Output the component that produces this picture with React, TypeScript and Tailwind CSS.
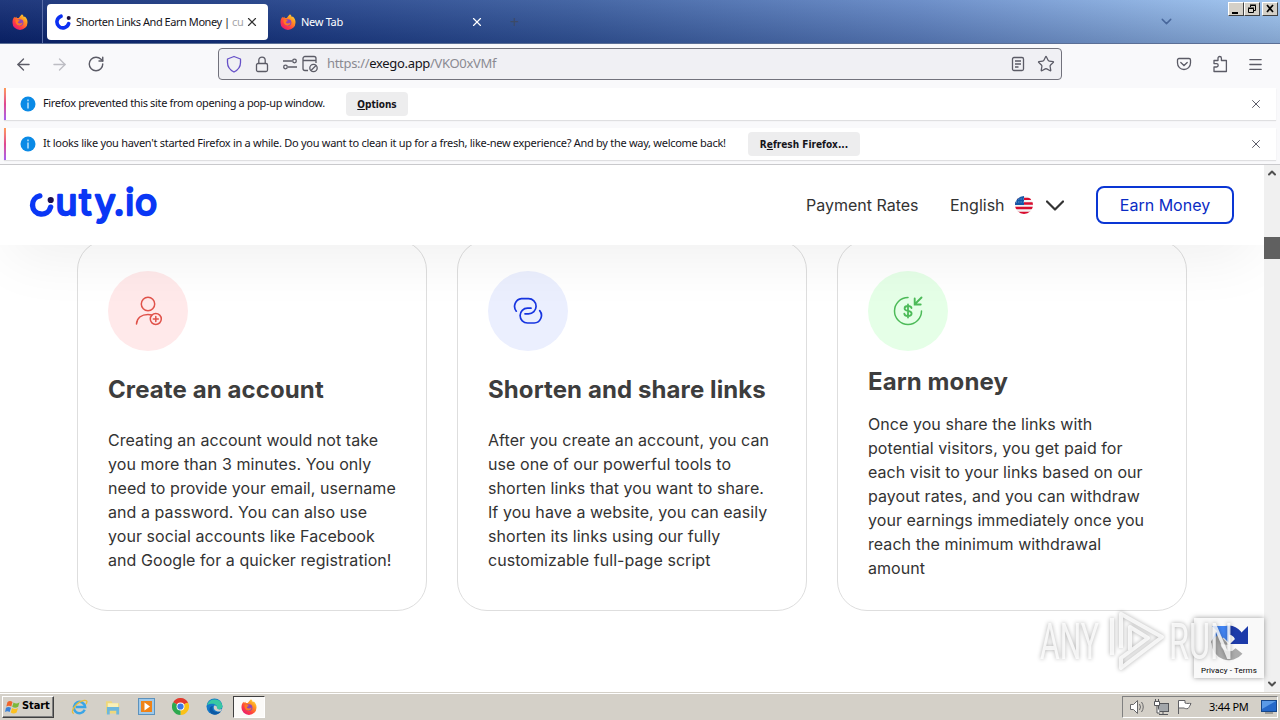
import {
  ArrowLeft,
  ArrowRight,
  ChevronDown,
  ChevronUp,
  Lock,
  Menu,
  RotateCw,
  Star,
  X,
} from "lucide-react";

function FirefoxIcon({ size = 16 }: any) {
  return (
    <svg width={size} height={size} viewBox="0 0 16 16" className="shrink-0">
      <defs>
        <linearGradient id="fxBody" x1="1" y1="0" x2="0.2" y2="1">
          <stop offset="0" stopColor="#fff04a" />
          <stop offset="0.35" stopColor="#ff9a1f" />
          <stop offset="0.7" stopColor="#ff4040" />
          <stop offset="1" stopColor="#e3167a" />
        </linearGradient>
      </defs>
      <path
        d="M10 0.3c1 .9 1.6 1.8 1.8 2.8.6-.1.9-.3 1-.5 1.800 1.500 2.900 3.700 2.700 6.200A7.500 7.200 0 0 1 .5 8.700C.4 6.500 1 4.300 2.500 2.800l.5 1.300c.4-.6.8-1 1.300-1.400l.5 1.200 2 .1C7.700 2.500 8.800 1.500 10 .3Z"
        fill="url(#fxBody)"
      />
      <circle cx="8" cy="8.600" r="3.400" fill="#8f45b8" />
      <path
        d="M3.500 6.200c1.600-.8 3-.5 4.500.7-1.200.2-2.200.7-2.200 1.500 1 1.300 3.300 1.300 4.800.2-.4 2.300-2 3.300-3.700 3-2.300-.4-3.700-2.700-3.400-5.400Z"
        fill="#ff7a22"
      />
    </svg>
  );
}

function CutyMark() {
  return (
    <svg width="16" height="16" viewBox="0 0 16 16" className="shrink-0">
      <path
        d="M6 2.200A6 6 0 1 0 13.700 9.600"
        fill="none"
        stroke="#0b2ff2"
        strokeWidth="3.600"
        strokeLinecap="round"
      />
      <circle cx="13.700" cy="4" r="2" fill="#1d0f3c" />
    </svg>
  );
}

function TabBar() {
  return (
    <div className="relative flex h-11 shrink-0 border-b border-[#5b6f96] bg-[linear-gradient(to_bottom,rgba(255,255,255,0.09),rgba(0,0,30,0.17)),linear-gradient(to_right,#0b2670_0%,#183883_20%,#34589c_45%,#6085c4_72%,#9dc4f0_100%)]">
      <div className="flex w-[43px] items-center border-r border-[#5a6ea8] pl-3">
        <FirefoxIcon />
      </div>
      <div className="ml-1 mt-1 flex h-9 w-[221px] items-center rounded bg-white pl-2">
        <CutyMark />
        <div className="ml-[5px] w-[169px] whitespace-nowrap text-[11px] tracking-[-0.45px] text-[#15141a]">
          Shorten Links And Earn Money | <span className="text-[#a5a5aa]">cu</span>
        </div>
        <X size={14} strokeWidth={2} className="text-[#333]" />
      </div>
      <div className="ml-3 flex h-11 w-[204px] items-center text-white">
        <FirefoxIcon />
        <span className="ml-[5px] grow text-[11px] tracking-[-0.3px]">New Tab</span>
        <X size={14} strokeWidth={2} />
      </div>
      <span className="ml-[26px] mt-[14px] text-[16px] leading-4 text-[#3c4a68]">
        +
      </span>
      <ChevronDown
        size={17}
        strokeWidth={2}
        className="ml-auto mr-[105px] mt-[13px] text-[#48679b]"
      />
      <div className="absolute right-[2px] top-[2px] flex text-black">
        <WinButton>
          <path d="M3 10h6v2H3z" fill="currentColor" />
        </WinButton>
        <WinButton>
          <path
            d="M5.500 5V3.500h5v5H9M3.500 6.500h5v4h-5zM5 3h6M3 6h6"
            fill="none"
            stroke="currentColor"
          />
        </WinButton>
        <span className="w-[2px]" />
        <WinButton>
          <path
            d="m4 3 6 7m0-7-6 7"
            fill="none"
            stroke="currentColor"
            strokeWidth="1.700"
          />
        </WinButton>
      </div>
    </div>
  );
}

function WinButton({ children }: any) {
  return (
    <div className="h-[14px] w-4 border border-b-[#404040] border-l-white border-r-[#404040] border-t-white bg-[#d4d0c8]">
      <svg width="14" height="12" viewBox="0 1 14 12">
        {children}
      </svg>
    </div>
  );
}

function NavBar() {
  return (
    <div className="flex h-11 shrink-0 items-center bg-[#f9f9fb] pb-1 text-[#5b5b66]">
      <ArrowLeft size={19} strokeWidth={1.700} className="ml-[14px]" />
      <ArrowRight
        size={19}
        strokeWidth={1.700}
        className="ml-[17px] text-[#bdbdc3]"
      />
      <RotateCw size={18} strokeWidth={1.900} className="ml-[18px]" />
      <div className="ml-[113px] flex h-8 w-[844px] items-center rounded border border-[#72727c] bg-[#f0f0f4] pl-[7px]">
        <svg width="16" height="18" viewBox="0 0 16 18" fill="none">
          <path
            d="M8 1.500 14.500 4v3.500c0 4.500-2.500 7.500-6.500 9.500-4-2-6.500-5-6.500-9.500V4Z"
            stroke="#6650c8"
            strokeWidth="1.300"
            strokeLinejoin="round"
          />
        </svg>
        <svg
          width="14"
          height="17"
          viewBox="0 0 14 17"
          fill="none"
          stroke="currentColor"
          strokeWidth="1.300"
          className="ml-[13px]"
        >
          <rect x="1.500" y="7.500" width="11" height="8" rx="1.500" />
          <path d="M3.800 7.500V4.300a3.200 3.200 0 0 1 6.400 0v3.200" />
        </svg>
        <svg
          width="36"
          height="18"
          viewBox="0 0 36 18"
          fill="none"
          stroke="currentColor"
          strokeWidth="1.300"
          className="ml-[13px]"
        >
          <path d="M1 6h9M6 12h9" />
          <circle cx="12.500" cy="6" r="1.800" />
          <circle cx="3.500" cy="12" r="1.800" />
          <path d="M26 15.500h-3a2 2 0 0 1-2-2v-10a2 2 0 0 1 2-2h9a2 2 0 0 1 2 2V8M21 5.500h13" />
          <circle cx="31.500" cy="13" r="3.700" />
          <path d="m29 15.500 5-5" />
        </svg>
        <span className="ml-[9px] pb-px text-[13px] tracking-[-0.32px] text-[#8a8a92]">
          https://<span className="text-[#15141a]">exego.app</span>/VKO0xVMf
        </span>
        <svg
          width="14"
          height="16"
          viewBox="0 0 14 16"
          fill="none"
          stroke="currentColor"
          strokeWidth="1.300"
          className="ml-auto"
        >
          <rect x="1.500" y="1.500" width="11" height="13" rx="1.500" />
          <path d="M4 5h6M4 8h6M4 11h3.500" />
        </svg>
        <Star size={18} strokeWidth={1.700} className="ml-3 mr-[6px]" />
      </div>
      <svg
        width="16"
        height="16"
        viewBox="0 0 16 16"
        fill="none"
        stroke="currentColor"
        strokeWidth="1.300"
        strokeLinecap="round"
        className="ml-[114px]"
      >
        <path d="M3 2.500h10a1.500 1.500 0 0 1 1.500 1.500v3a6.500 6.500 0 0 1-13 0V4A1.500 1.500 0 0 1 3 2.500Z" />
        <path d="m4.800 6.500 3.200 3 3.200-3" />
      </svg>
      <svg
        width="18"
        height="18"
        viewBox="0 0 18 18"
        fill="none"
        stroke="currentColor"
        strokeWidth="1.300"
        strokeLinejoin="round"
        className="ml-[19px]"
      >
        <path d="M3 16.500V12h2.500a1.700 1.700 0 0 0 0-3.400H3V5.500h4V3.200a1.700 1.700 0 0 1 3.400 0v2.300h5v11Z" />
      </svg>
      <Menu size={17} strokeWidth={1.800} className="ml-[18px]" />
    </div>
  );
}

function Notice({ text, width, button }: any) {
  return (
    <div className="mr-1 ml-1 flex h-8 shrink-0 items-center bg-white shadow-[0_1px_1px_rgba(0,0,0,0.1)]">
      <div className="h-8 w-[2px] bg-gradient-to-b from-[#ff9a56] via-[#e0458f] to-[#a55cf0]" />
      <svg width="16" height="16" viewBox="0 0 16 16" className="ml-[14px]">
        <circle cx="8" cy="8" r="7.500" fill="#0a8ae6" />
        <path d="M8 3.500v1.700M8 6.500v6" stroke="#d5efff" strokeWidth="1.300" />
      </svg>
      <span className={`ml-[7px] whitespace-nowrap pb-[2px] text-[11px] text-[#15141a] ${width}`}>
        {text}
      </span>
      {button}
      <X size={14} strokeWidth={1.700} className="ml-auto mr-[13px] text-[#5b5b66]" />
    </div>
  );
}

function NoticeButton({ children, className }: any) {
  return (
    <div
      className={`flex h-6 items-center justify-center rounded bg-[#ededee] font-['DejaVu_Sans_Condensed'] text-[10px] font-bold text-[#15141a] ${className}`}
    >
      <span>{children}</span>
    </div>
  );
}

function CutyLogo() {
  return (
    <svg
      width="134"
      height="44"
      viewBox="28 183 134 44"
      className="shrink-0 overflow-visible"
    >
      <path
        d="M39.800 195.900A9.200 9.200 0 1 0 50.600 207.200"
        fill="none"
        stroke="#0a37f5"
        strokeWidth="5.400"
        strokeLinecap="round"
      />
      <circle cx="50.700" cy="200" r="3.100" fill="#1d0f4c" />
      <text
        x="55.500 79.300 94.800 113.700 125.200 135"
        y="214.500"
        fill="#0a37f5"
        stroke="#0a37f5"
        strokeWidth="2.400"
        strokeLinejoin="round"
        className="font-['Inter'] text-[37px] font-normal"
      >
        uty.io
      </text>
    </svg>
  );
}

function UsFlag() {
  return (
    <svg width="18" height="18" viewBox="0 0 18 18">
      <clipPath id="flagClip">
        <circle cx="9" cy="9" r="9" />
      </clipPath>
      <g clipPath="url(#flagClip)">
        <rect width="18" height="18" fill="#f3f3f3" />
        <path
          d="M0 2.800h18M0 7.500h18M0 12h18M0 16.800h18"
          stroke="#d80d2f"
          strokeWidth="2.300"
        />
        <rect width="9" height="9" fill="#1257a8" />
        <path
          d="M1 3h8M1 6h8"
          stroke="#8fb5df"
          strokeWidth="0.900"
          strokeDasharray="1 1.300"
        />
      </g>
    </svg>
  );
}

function SiteHeader() {
  return (
    <header className="relative z-10 flex h-20 shrink-0 items-center bg-white pl-7 pr-[30px] text-base text-[#333] shadow-[0_20px_60px_-10px_rgba(0,0,0,0.07)]">
      <CutyLogo />
      <span className="ml-auto w-[112px] whitespace-nowrap">Payment Rates</span>
      <span className="ml-8 w-[54px]">English</span>
      <div className="ml-[11px]">
        <UsFlag />
      </div>
      <svg width="18" height="11" viewBox="0 0 18 11" fill="none" className="ml-[13px]">
        <path
          d="m1 1.500 8 8 8-8"
          stroke="#333"
          strokeWidth="2.200"
          strokeLinecap="round"
          strokeLinejoin="round"
        />
      </svg>
      <div className="ml-8 flex h-[38px] w-[138px] items-center justify-center rounded-lg border-2 border-[#0a36d4] text-[#0a2bc4]">
        Earn Money
      </div>
    </header>
  );
}

function Card({ icon, circle, title, titleClass, lines }: any) {
  return (
    <div className="h-[371px] w-[350px] rounded-[30px] border border-[#dedede] px-[30px] pt-[30px] text-[#333]">
      <div
        className={`flex h-20 w-20 items-center justify-center rounded-full ${circle}`}
      >
        {icon}
      </div>
      <h3
        className={`whitespace-nowrap text-2xl font-bold leading-[30px] tracking-[0.1px] text-[#3d3d3d] ${titleClass}`}
      >
        {title}
      </h3>
      <p className="whitespace-nowrap text-base leading-6 tracking-[0.06px]">
        {lines.map((line: string) => (
          <span key={line} className="block">
            {line}
          </span>
        ))}
      </p>
    </div>
  );
}

const userIcon = (
  <svg width="30" height="30" viewBox="0 0 30 30" fill="none" stroke="#e0524a" strokeWidth="1.500" strokeLinecap="round">
    <circle cx="15" cy="8" r="6.700" />
    <path d="M3.500 28c.5-6.200 5.300-9.500 11.500-9.500 1.500 0 2.500.1 3.500.5" />
    <circle cx="22.800" cy="23" r="5.500" />
    <path d="M20.300 23h5M22.800 20.500v5" />
  </svg>
);

const linkIcon = (
  <svg width="30" height="30" viewBox="0 0 30 30" fill="none" stroke="#1735e0" strokeWidth="1.700" strokeLinecap="round">
    <path d="M3.300 15.200A7.800 7.800 0 0 1 8.500 2.600H15.500a7.600 7.600 0 0 1 0 15.200H12" />
    <path d="M18 12.200H14.500a7.400 7.400 0 0 0 0 14.800H21.200A7.600 7.600 0 0 0 26.700 14.600" />
  </svg>
);

const moneyIcon = (
  <svg width="30" height="30" viewBox="0 0 30 30" fill="none" stroke="#4dbb59" strokeWidth="1.500" strokeLinecap="round">
    <path d="M15 1.500A13.500 13.500 0 1 0 28.500 15" />
    <path d="m28.500 1.500-6.500 6.500M21.700 2.500v6h6" strokeWidth="1.900" />
    <path
      d="M18.500 12c-.3-1.400-1.600-2-3.500-2s-3.400.8-3.400 2.400c0 3.500 7 1.500 7 5.100 0 1.700-1.500 2.500-3.600 2.500s-3.500-.8-3.700-2.400M15 8.500v13"
      strokeWidth="1.800"
    />
  </svg>
);

function Recaptcha() {
  return (
    <div className="absolute bottom-[14px] right-4 flex h-[60px] w-[70px] flex-col items-center bg-[#f9f9f9] pt-[5px] shadow-[0_0_5px_rgba(128,128,128,0.8)]">
      <svg width="40" height="40" viewBox="0 0 40 40" fill="none">
        <path d="M31 20A12 12 0 0 0 20 7" stroke="#1c3aa9" strokeWidth="9" />
        <path d="M39 3v18H21Z" fill="#1c3aa9" />
        <path d="M20 7A13 13 0 0 0 8 20" stroke="#4285f4" strokeWidth="9" />
        <path d="M3 3h17v17Z" fill="#4285f4" />
        <path d="M7 20a13 13 0 0 0 23 8" stroke="#ababab" strokeWidth="9" />
        <path d="M2 20v-2l8-7 10 11Z" fill="#ababab" />
      </svg>
      <span className="mt-px whitespace-nowrap font-['Roboto'] text-[8px] leading-[14px] tracking-[0.1px] text-black">
        Privacy - Terms
      </span>
    </div>
  );
}

function Watermark() {
  return (
    <svg
      width="204"
      height="70"
      viewBox="1034 606 204 70"
      className="absolute bottom-4 right-[42px] overflow-visible drop-shadow-[0_0_2px_rgba(0,0,0,0.4)]"
    >
      <g opacity="0.8">
        <text
          x="1040"
          y="659"
          textLength="59"
          lengthAdjust="spacingAndGlyphs"
          fill="#fff"
          className="font-['Roboto'] text-[50px]"
        >
          ANY
        </text>
        <text
          x="1169"
          y="659"
          textLength="64"
          lengthAdjust="spacingAndGlyphs"
          fill="#fff"
          className="font-['Roboto'] text-[50px]"
        >
          RUN
        </text>
        <path
          d="M1112 655v-37M1121 648v-34l41 23-41 31v-10l27-20-18-11v23"
          fill="none"
          stroke="#fff"
          strokeWidth="4"
          strokeLinejoin="round"
        />
      </g>
    </svg>
  );
}

function ScrollBar() {
  return (
    <div className="flex w-4 shrink-0 flex-col items-center bg-[#f0f0f0] text-[#505050]">
      <ChevronUp size={12} strokeWidth={4} className="mt-[2px]" />
      <div className="mt-[58px] h-[22px] w-4 bg-[#606060]" />
      <ChevronDown size={12} strokeWidth={4} className="mb-[2px] mt-auto" />
    </div>
  );
}

function TaskBar() {
  return (
    <div className="flex h-7 shrink-0 items-center border-t border-[#d4d0c8] bg-[#d4d0c8] pl-[2px] pr-[2px] shadow-[inset_0_1px_0_#fff]">
      <div className="flex h-[22px] w-[52px] items-center border border-b-[#404040] border-l-white border-r-[#404040] border-t-white pl-[2px] shadow-[inset_-1px_-1px_0_#808080]">
        <svg width="16" height="16" viewBox="0 0 16 16">
          <path d="M2.500 3q2.500-2 5 0L6.300 7.500q-2.500-1.500-5 0Z" fill="#f0652b" />
          <path d="M8.500 3.500q3 2 6-.3l-1.300 4.500q-3 2-6 0Z" fill="#7cb83a" />
          <path d="M1 8.700q2.500-1.600 5 0L4.700 13q-2.500-1.500-4.700 0Z" fill="#3a82d8" />
          <path d="M7 9q3 2 6 0l-1.400 4.500q-3 2-5.800 0Z" fill="#fcc01f" />
        </svg>
        <span className="ml-px font-['DejaVu_Sans_Condensed'] text-[11px] font-bold tracking-[-0.1px] text-black">
          Start
        </span>
      </div>
      <div className="ml-[17px] flex items-center gap-[17px]">
        <svg width="17" height="18" viewBox="0 0 18 18" fill="none">
          <path d="M14.500 12A6 6 0 1 1 15 9H5" stroke="#3aa5e6" strokeWidth="2.600" />
          <path d="M3 16C-2 15 6 3 14 2c4-.5 3 2 2 4" stroke="#e8bd3a" strokeWidth="1.400" />
        </svg>
        <svg width="16" height="18" viewBox="0 0 17 18">
          <path d="M1 3h6l1 2h7v11H1Z" fill="#eed77c" />
          <path d="M3 5h11v4H3Z" fill="#f9f0b8" />
          <path d="M2 9h13v8h-3v-4H5v4H2Z" fill="#6db7dd" />
        </svg>
        <svg width="17" height="17" viewBox="0 0 17 17">
          <rect x="0.500" y="0.500" width="16" height="16" fill="#9fc9ea" stroke="#5c92bd" />
          <rect x="3" y="3" width="11" height="11" fill="#ef8318" />
          <path d="m6.500 4.500 5.500 4-5.500 4Z" fill="#fff" />
        </svg>
        <svg width="17" height="17" viewBox="0 0 18 18">
          <path d="M9 9 1.200 4.500A9 9 0 0 1 16.800 4.500Z" fill="#e33b2e" />
          <path d="M9 9 16.800 4.500A9 9 0 0 1 9 18Z" fill="#fbc116" />
          <path d="M9 9v9A9 9 0 0 1 1.200 4.500Z" fill="#2da94f" />
          <path d="M9 5h7.900l-.1-.5L9 2Z" fill="#e33b2e" />
          <circle cx="9" cy="9" r="4.200" fill="#fff" />
          <circle cx="9" cy="9" r="3.300" fill="#3b78e7" />
        </svg>
        <svg width="17" height="17" viewBox="0 0 17 17">
          <circle cx="8.500" cy="8.500" r="8" fill="#1579c8" />
          <path d="M1 7A8 8 0 0 1 16.500 8c0 3-3 3.500-5.500 3 1-4-3-7-10-4Z" fill="#38c7a3" />
          <path d="M7 8c-2 4 2 8 8 5.500-2 3-6 4-9 2.500C2 13 3 8 7 8Z" fill="#0c59a4" />
          <path d="M8 8c1-1 3 0 3 1.500-.7 1.500 2 2.500 5 1.500l-1.500 2.500C9 14 7 11 8 8Z" fill="#d4d0c8" />
        </svg>
      </div>
      <div className="ml-[10px] flex h-[22px] w-8 items-center justify-center border border-b-white border-l-[#404040] border-r-white border-t-[#404040] bg-[#fbfaf8]">
        <FirefoxIcon />
      </div>
      <div className="ml-auto mt-px flex h-[22px] w-[156px] items-center border border-b-white border-l-[#808080] border-r-white border-t-[#808080] pl-[6px]">
        <svg width="17" height="16" viewBox="0 0 17 16" fill="none" stroke="#68686a">
          <path d="M1.500 5.500h3l4-4v13l-4-4h-3Z" fill="#fff" />
          <path d="M10.500 5q2 3 0 6M12.500 3q3.500 5 0 10" />
        </svg>
        <svg width="17" height="17" viewBox="0 0 17 17" fill="none" stroke="#55565a" className="ml-[7px]">
          <rect x="5.500" y="4.500" width="10" height="8" fill="#a2a6aa" />
          <path d="M10 13v2M6 15.500h9" />
          <path d="M1.500 2.500h5v4h-5ZM4 7v7h3M2.500 0v2M5.500 0v2" fill="#fff" />
        </svg>
        <svg width="17" height="16" viewBox="0 0 17 16" fill="#fff" stroke="#606064" className="ml-[6px]">
          <path d="M2.500 15V1.500H9V4c2 1 4 0 6 .5-1 2-2 4-3 5-2 .5-3 0-4-.5H2.500" />
        </svg>
        <span className="ml-4 w-10 whitespace-nowrap text-[11px] tracking-[-0.25px] text-black">
          3:44 PM
        </span>
        <svg width="16" height="14" viewBox="0 0 16 14" className="ml-3">
          <rect x="0.500" y="0.500" width="15" height="11" fill="#2568c9" stroke="#174789" />
          <path d="M1 1h14L1 9Z" fill="#5b9ae6" />
          <path d="M4 13h8" stroke="#666" />
        </svg>
      </div>
    </div>
  );
}

function App() {
  return (
    <div className="flex h-[720px] w-[1280px] flex-col overflow-hidden bg-white font-['Noto_Sans',sans-serif]">
      <TabBar />
      <NavBar />
      <div className="flex h-[77px] shrink-0 flex-col gap-2 border-b border-[#c9c9cc] bg-[#f9f9fb]">
        <Notice
          text="Firefox prevented this site from opening a pop-up window."
          width="w-[303px] tracking-[-0.35px]"
          button={
            <NoticeButton className="w-[62px]">
              <u>O</u>ptions
            </NoticeButton>
          }
        />
        <Notice
          text="It looks like you haven't started Firefox in a while. Do you want to clean it up for a fresh, like-new experience? And by the way, welcome back!"
          width="w-[705px] tracking-[-0.28px]"
          button={
            <NoticeButton className="w-28">
              R<u>e</u>fresh Firefox...
            </NoticeButton>
          }
        />
      </div>
      <div className="relative flex min-h-0 grow font-['Inter',sans-serif]">
        <div className="flex w-[1264px] flex-col overflow-hidden">
          <SiteHeader />
          <main className="-mt-[5px] ml-[77px] flex gap-[30px]">
            <Card
              icon={userIcon}
              circle="bg-[#ffe9ea]"
              title="Create an account"
              titleClass="mt-6 mb-[23px]"
              lines={[
                "Creating an account would not take",
                "you more than 3 minutes. You only",
                "need to provide your email, username",
                "and a password. You can also use",
                "your social accounts like Facebook",
                "and Google for a quicker registration!",
              ]}
            />
            <Card
              icon={linkIcon}
              circle="bg-[#ebeffe]"
              title="Shorten and share links"
              titleClass="mt-6 mb-[23px]"
              lines={[
                "After you create an account, you can",
                "use one of our powerful tools to",
                "shorten links that you want to share.",
                "If you have a website, you can easily",
                "shorten its links using our fully",
                "customizable full-page script",
              ]}
            />
            <Card
              icon={moneyIcon}
              circle="bg-[#e5ffe7]"
              title="Earn money"
              titleClass="mt-4 mb-[15px]"
              lines={[
                "Once you share the links with",
                "potential visitors, you get paid for",
                "each visit to your links based on our",
                "payout rates, and you can withdraw",
                "your earnings immediately once you",
                "reach the minimum withdrawal",
                "amount",
              ]}
            />
          </main>
        </div>
        <ScrollBar />
        <Recaptcha />
        <Watermark />
      </div>
      <TaskBar />
    </div>
  );
}

export default App;
